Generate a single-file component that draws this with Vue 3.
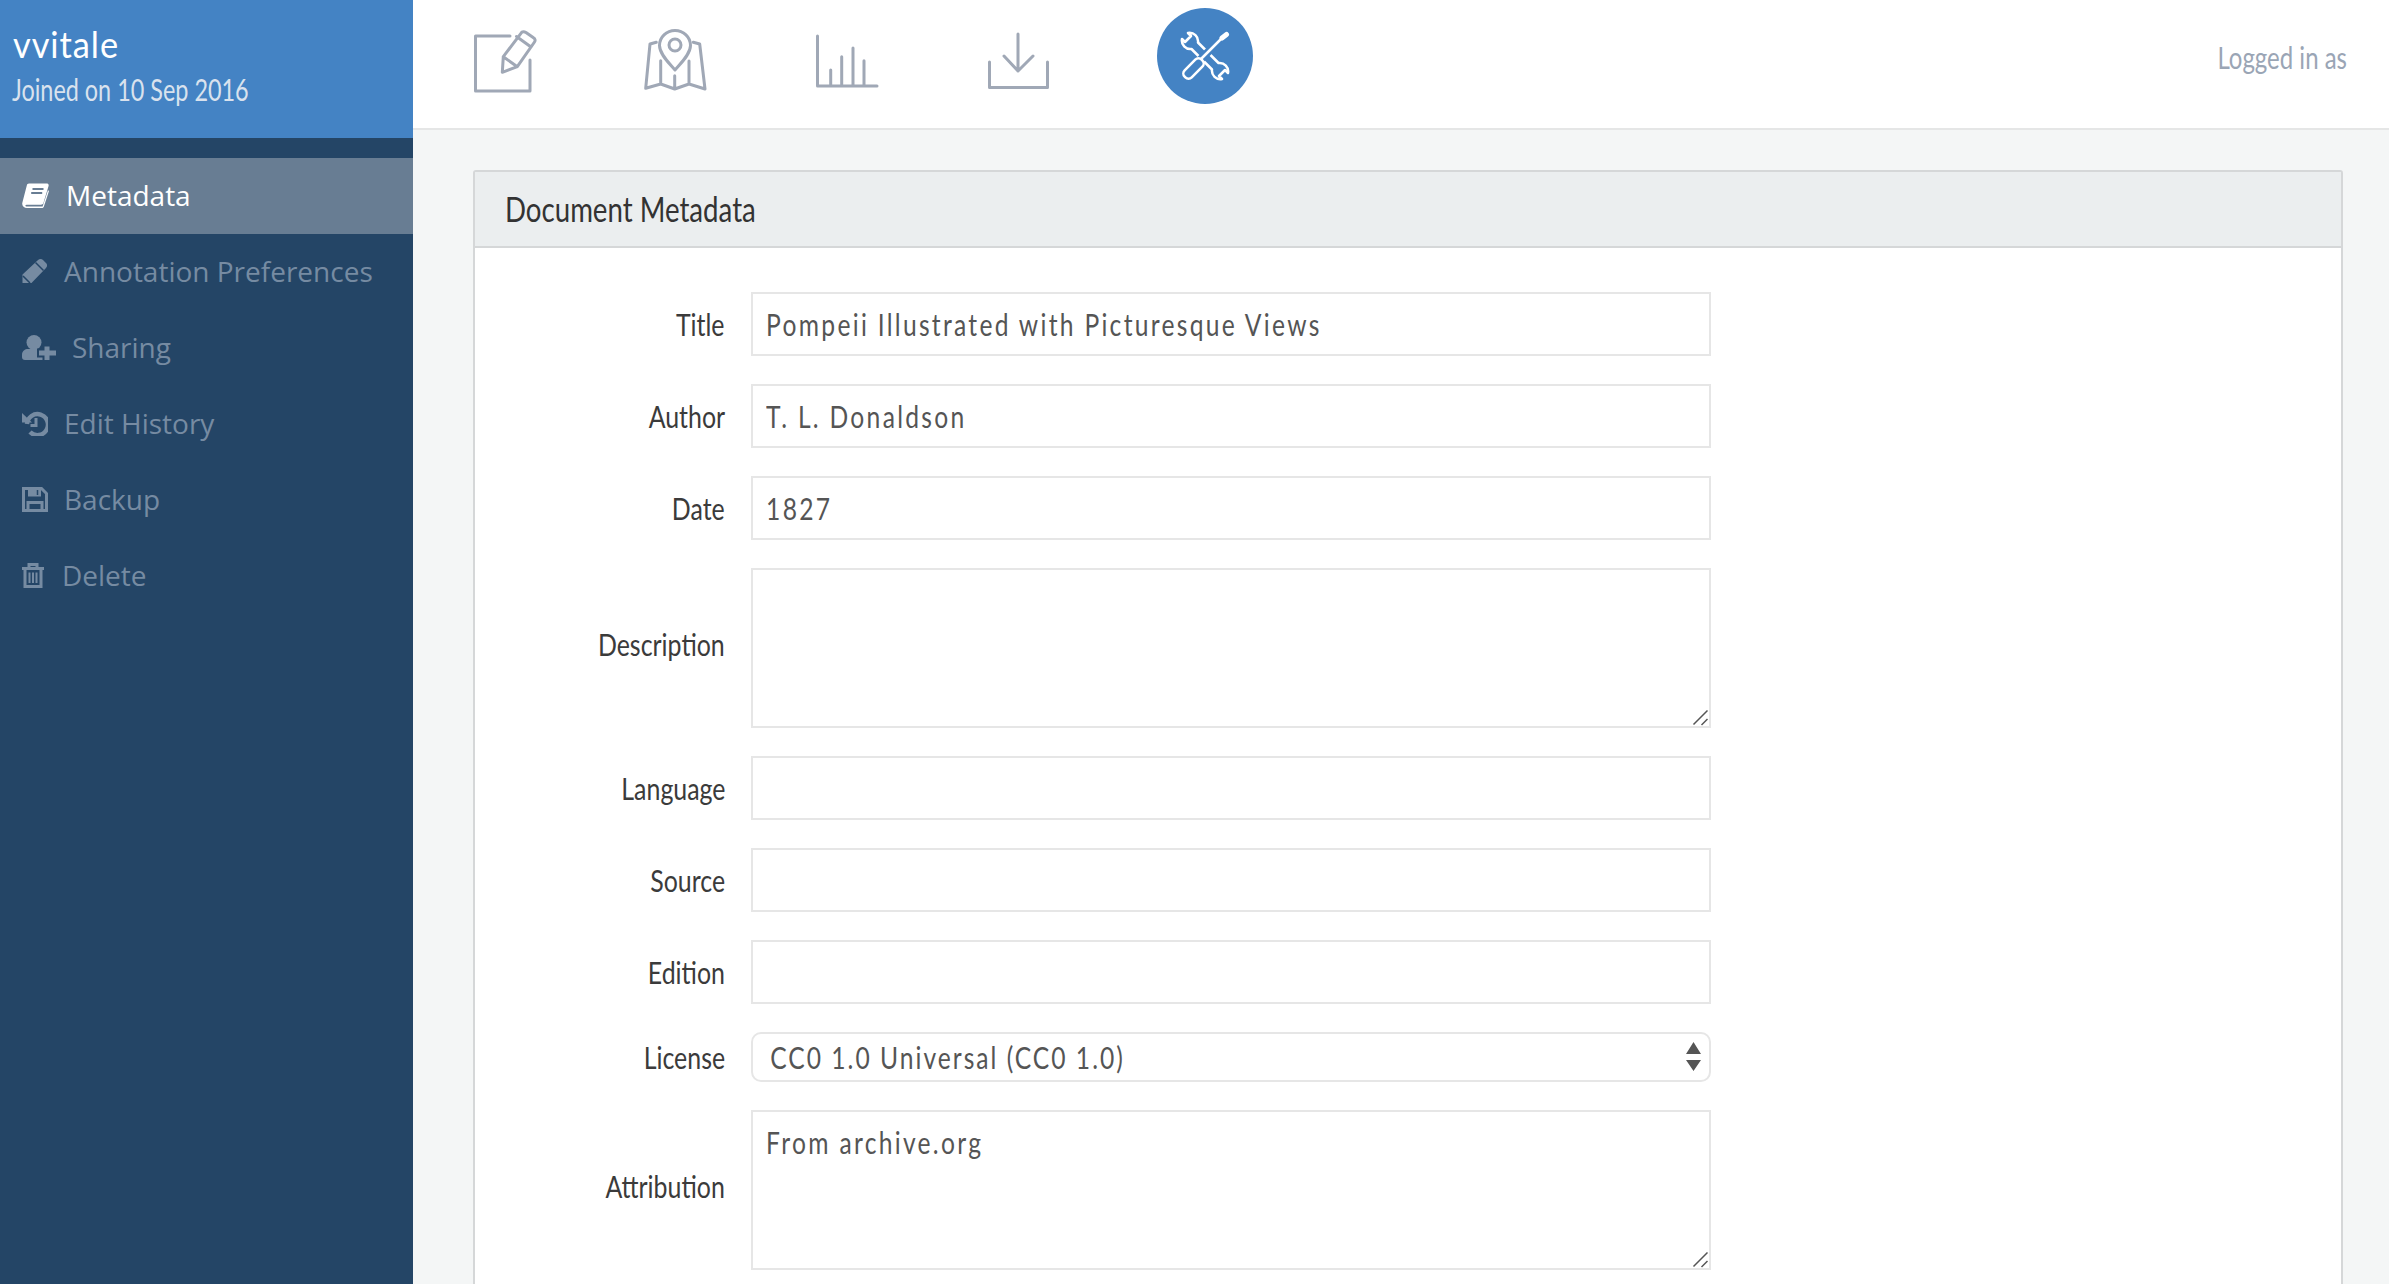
<script setup>
const navItems = [
  { label: 'Metadata', icon: 'book', width: 27, gap: 17, active: true },
  { label: 'Annotation Preferences', icon: 'pencil', width: 25, gap: 17 },
  { label: 'Sharing', icon: 'share', width: 34, gap: 16 },
  { label: 'Edit History', icon: 'history', width: 26, gap: 16 },
  { label: 'Backup', icon: 'save', width: 26, gap: 16 },
  { label: 'Delete', icon: 'trash', width: 22, gap: 18 }
]
const fields = [
  { label: 'Title', type: 'input', value: 'Pompeii Illustrated with Picturesque Views' },
  { label: 'Author', type: 'input', value: 'T. L. Donaldson' },
  { label: 'Date', type: 'input', value: '1827' },
  { label: 'Description', type: 'textarea', value: '' },
  { label: 'Language', type: 'input', value: '' },
  { label: 'Source', type: 'input', value: '' },
  { label: 'Edition', type: 'input', value: '' },
  { label: 'License', type: 'select', value: 'CC0 1.0 Universal (CC0 1.0)' },
  { label: 'Attribution', type: 'textarea', value: 'From archive.org' }
]
</script>

<template>
  <div class="app">
    <aside class="sidebar">
      <header class="user">
        <div class="name"><span>vvitale</span></div>
        <div class="joined"><span>Joined on 10 Sep 2016</span></div>
      </header>
      <nav class="nav">
        <a v-for="item in navItems" :key="item.label" class="nav-item" :class="{ active: item.active }">
          <svg class="nav-icon" :width="item.width" height="25" :viewBox="`0 0 ${item.width} 25`" :style="{ marginRight: item.gap + 'px' }">
            <template v-if="item.icon === 'book'">
              <path class="solid" d="M7 .5H24.5C26.3.5 27 1.6 26.5 3.2L21.4 20C21 21.2 20.2 21.7 19 21.7H5.5C3.6 21.7 3.2 22.4 3.5 22.9 3.8 23.4 4.4 23.5 5.2 23.5H20.6L26 7.2 27 8 21.8 23.8C21.4 24.6 20.8 25 19.8 25H5C1.8 25 -.5 22.6.4 19.4L4.8 2.4C5.1 1.2 5.8.5 7 .5Z" />
              <path class="cut" d="M10.5 6H21.5M9.2 10H20.2" />
            </template>
            <template v-else-if="item.icon === 'pencil'">
              <path class="solid" d="M.5 15.500 15.500 1.500C17.500 -.3 19.500 -.3 21 1L24 4C25.500 5.500 25.500 7.500 24 9L9.500 24H.5Z" />
              <path class="cut thin" d="M13.500 3.500 21.500 11.500M1 17 8 24" />
            </template>
            <template v-else-if="item.icon === 'share'">
              <circle class="solid" cx="12" cy="7.500" r="7.500" />
              <path class="solid" d="M0 22V19.500C0 16 3 14 6 14H18C21 14 23 15 24 17V25H3C1 25 0 24 0 22Z" />
              <path class="plus-cut" d="M25 10V25M15 18H34" />
              <path class="plus" d="M25 11.500V25M17 18H34" />
            </template>
            <template v-else-if="item.icon === 'history'">
              <path class="line thick" d="M5 13A10.500 10.500 0 1 1 8 21" />
              <path class="solid" d="M0 2 10 11.500H0Z" />
              <path class="line medium" d="M14 7V14.500H8.500" />
            </template>
            <template v-else-if="item.icon === 'save'">
              <path class="line medium" d="M1.500 1.500H19.500L24.500 6.500V23.500H1.500Z" />
              <path class="solid" d="M6 1.500H19V9.500H6Z" />
              <path class="cut thin" d="M15.500 3V8" />
              <path class="line medium" d="M6 23.500V15.500H20V23.500" />
            </template>
            <template v-else>
              <path class="line medium" d="M0 5.500H22M7 5.500V1.500H15V5.500M3 5.500V23.500H19V5.500" />
              <path class="line thin" d="M7.500 9.500V20M11 9.500V20M14.500 9.500V20" />
            </template>
          </svg>
          <span>{{ item.label }}</span>
        </a>
      </nav>
    </aside>

    <main class="main">
      <div class="topbar">
        <div class="tools">
          <svg width="62" height="62" viewBox="0 0 62 62" class="tool-icon">
            <path d="M36 6H1.500V61H56V30" />
            <path d="M28.300 42.300 29.300 26.700 47.700 2.300C49 1.300 50.500 1.600 52 2.500L59.500 7.800C61.300 9 61.500 10.500 60.500 12L43.300 36.700ZM29.300 26.700 43.300 36.700M42.500 6.500 57 17" />
          </svg>
          <svg width="62" height="62" viewBox="0 0 62 62" class="tool-icon">
            <path d="M30 40C24 33 14.500 24 14.500 15.500A15.500 15 0 0 1 45.500 15.500C45.500 24 36 33 30 40Z" />
            <circle cx="30" cy="15" r="6" />
            <path d="M11.300 12.300 5 14 .7 58.300 15.700 54 29.700 59 44 54 60 59 54.700 14 48.300 12.300M15.700 30.700V54M29.700 45.700V59M44 31V54" />
          </svg>
          <svg width="62" height="62" viewBox="0 0 62 62" class="tool-icon">
            <path d="M1.500 6V56H61M14.700 40V56M25.700 26.700V56M37 18V56M48 30.700V56" />
          </svg>
          <svg width="62" height="62" viewBox="0 0 62 62" class="tool-icon">
            <path d="M1.500 32V57.500H59.500V32M30 4V41M16 26 30 41 45 26" />
          </svg>
          <div class="tool-active">
            <svg width="50" height="50" viewBox="0 0 50 50">
              <path class="w-line" d="M8 2 11 5 5 11 2 8A8.500 8.500 0 0 0 11.500 18L32 38.500A8.500 8.500 0 0 0 42 48L39 45 45 39 48 42A8.500 8.500 0 0 0 38.500 32L18 11.500A8.500 8.500 0 0 0 8 2Z" />
              <path class="b-line" d="M43 6 19 30" />
              <path class="w-line" d="M43 6 19 30" />
              <path class="w-tip" d="M42 7 46.500 3.500" />
              <rect class="w-handle" x="1.500" y="32.500" width="24" height="10" rx="4.500" transform="rotate(-45 13.500 37.500)" />
            </svg>
          </div>
        </div>
        <div class="logged"><span>Logged in as</span></div>
      </div>

      <section class="content">
        <div class="panel">
          <h2 class="panel-head"><span>Document Metadata</span></h2>
          <form class="form">
            <div v-for="f in fields" :key="f.label" class="row">
              <label class="label" :class="{ 'area-label': f.type === 'textarea' }"><span>{{ f.label }}</span></label>
              <div class="field" :class="`field-${f.type}`">
                <input v-if="f.type === 'input'" class="control" type="text" :value="f.value" />
                <textarea v-else-if="f.type === 'textarea'" class="control area" :value="f.value"></textarea>
                <select v-else class="control select">
                  <option>{{ f.value }}</option>
                </select>
                <svg v-if="f.type === 'textarea'" class="grip" width="16" height="16" viewBox="0 0 16 16">
                  <path d="M15.500 .5 1.500 14.500M15.500 9 9.500 15" />
                </svg>
                <svg v-if="f.type === 'select'" class="arrows" width="15" height="30" viewBox="0 0 15 30">
                  <path d="M7.500 0 15 12H0ZM0 18H15L7.500 29Z" />
                </svg>
              </div>
            </div>
          </form>
        </div>
      </section>
    </main>
  </div>
</template>

<style>
html, body { margin: 0; height: 100%; overflow: hidden; }
</style>

<style scoped>
.app {
  display: flex;
  height: 1284px;
  overflow: hidden;
  font-family: Lato, "Liberation Sans", sans-serif;
}
.sidebar { width: 413px; flex: none; background: #244566; }
.user {
  height: 138px;
  box-sizing: border-box;
  background: #4483c4;
  padding: 23px 12px 0;
  color: #fff;
  white-space: nowrap;
}
.name { font-size: 37px; line-height: 42px; padding-left: 1px; }
.name span { display: inline-block; transform: scaleX(.93); transform-origin: left; letter-spacing: 1px; }
.joined { font-size: 30px; line-height: 38px; margin-top: 5px; color: #d9e2ee; }
.joined span { display: inline-block; transform: scaleX(.78); transform-origin: left; }
.nav { margin-top: 20px; }
.nav-item {
  display: flex;
  align-items: center;
  box-sizing: border-box;
  height: 76px;
  padding: 0 0 2px 22px;
  font-family: "Open Sans", sans-serif;
  font-size: 28px;
  color: #768ba2;
}
.nav-item.active { background: #687d93; color: #fff; }
.nav-icon { flex: none; }
.solid { fill: currentColor; }
.line { fill: none; stroke: currentColor; }
.thin { stroke-width: 2; }
.medium { stroke-width: 3; }
.thick { stroke-width: 4.500; }
.cut { fill: none; stroke: #687d93; stroke-width: 2; }
.cut.thin { stroke: #244566; stroke-width: 1.500; }
.plus-cut { fill: none; stroke: #244566; stroke-width: 9; }
.plus { fill: none; stroke: currentColor; stroke-width: 5; }

.main { flex: 1; min-width: 0; display: flex; flex-direction: column; background: #f4f6f6; }
.topbar {
  height: 130px;
  box-sizing: border-box;
  flex: none;
  background: #fff;
  border-bottom: 2px solid #e5e6e6;
  display: flex;
  justify-content: space-between;
  padding: 0 42px 0 61px;
}
.tools { display: flex; gap: 109.200px; }
.tool-icon {
  margin-top: 30px;
  fill: none;
  stroke: #a0a8b6;
  stroke-width: 3;
  stroke-linejoin: round;
  stroke-linecap: round;
  overflow: visible;
}
.tool-active {
  width: 96px;
  height: 96px;
  margin: 8px 0 0 -2px;
  border-radius: 50%;
  background: #4483c4;
  display: flex;
  align-items: center;
  justify-content: center;
}
.w-line { fill: none; stroke: #fff; stroke-width: 2.500; stroke-linejoin: round; }
.b-line { fill: none; stroke: #4483c4; stroke-width: 8; }
.w-tip { fill: none; stroke: #fff; stroke-width: 5; stroke-linecap: round; }
.w-handle { fill: #4483c4; stroke: #fff; stroke-width: 2.500; }
.logged { margin-top: 37px; font-size: 30px; line-height: 40px; color: #9aa5b5; white-space: nowrap; }
.logged span { display: inline-block; transform: scaleX(.8); transform-origin: right; }

.content { padding: 40px 46px 0 60px; }
.panel {
  background: #fff;
  border: 2px solid #d5d7d8;
  border-radius: 3px;
  min-height: 1200px;
}
.panel-head {
  height: 74px;
  margin: 0;
  padding: 0 30px;
  background: #ebeeef;
  border-bottom: 2px solid #d5d7d8;
  font-size: 35px;
  font-weight: 400;
  line-height: 72px;
  color: #333;
}
.panel-head span { display: inline-block; transform: scaleX(.79); transform-origin: left; }
.form {
  padding-top: 44px;
  display: flex;
  flex-direction: column;
  gap: 28px;
}
.row {
  display: grid;
  grid-template-columns: 250px 960px;
  column-gap: 26px;
  align-items: center;
}
.label { text-align: right; font-size: 30px; color: #3b3b3b; white-space: nowrap; }
.label span { display: inline-block; transform: scaleX(.83); transform-origin: right; }
.area-label { padding-bottom: 8px; }
.field {
  position: relative;
  box-sizing: border-box;
  width: 960px;
  height: 64px;
  border: 2px solid #e6e6e6;
  background: #fff;
  overflow: hidden;
}
.field-textarea { height: 160px; }
.field-select { height: 50px; border-radius: 10px; }
.control {
  display: block;
  box-sizing: border-box;
  width: calc(956px / .82);
  height: 100%;
  margin: 0;
  padding: 0 0 0 16px;
  border: 0;
  background: transparent;
  outline: none;
  font-family: inherit;
  font-size: 30px;
  letter-spacing: 2.800px;
  color: #555;
  transform: scaleX(.82);
  transform-origin: left;
}
.area { padding-top: 12px; line-height: 36px; resize: none; }
.select {
  padding-left: 21px;
  letter-spacing: 2.450px;
  appearance: none;
  -webkit-appearance: none;
}
.grip {
  position: absolute;
  right: 1px;
  bottom: 0;
  fill: none;
  stroke: #555;
  stroke-width: 1.500;
}
.arrows { position: absolute; right: 8px; top: 8px; fill: #555; }
</style>
